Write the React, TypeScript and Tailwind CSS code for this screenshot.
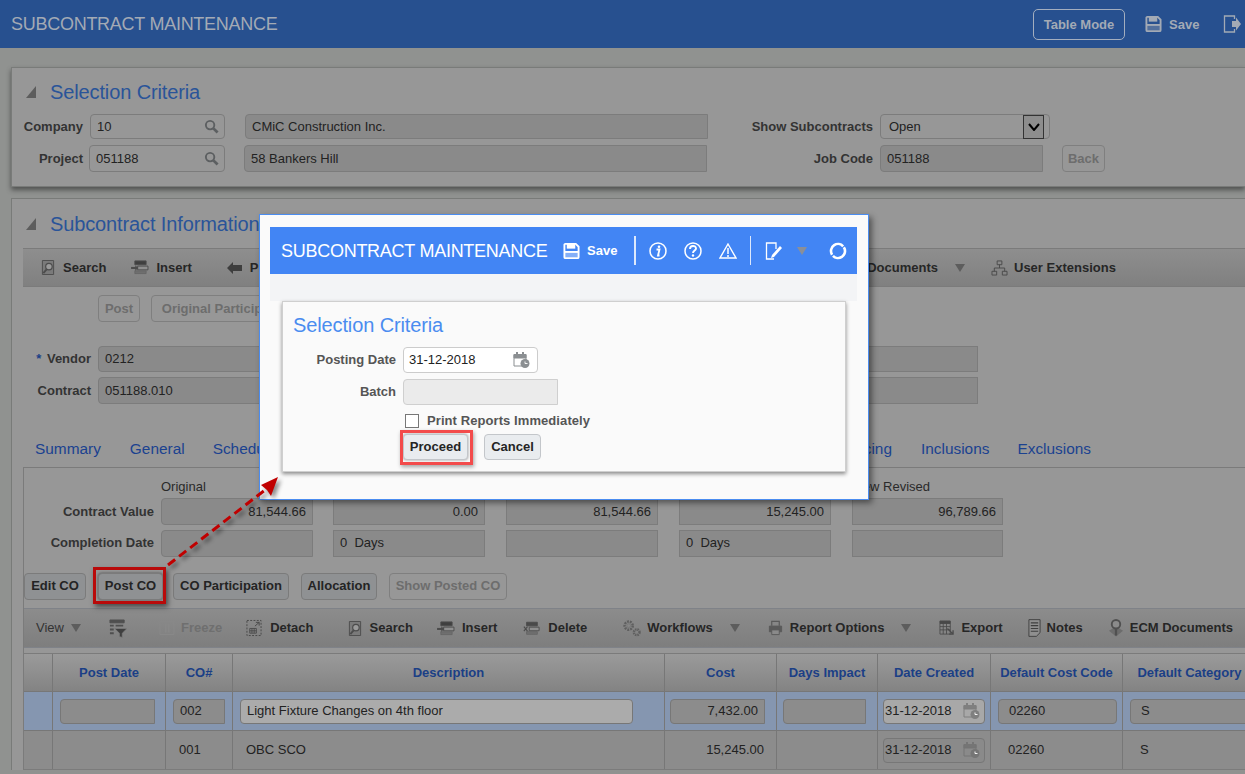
import type { ReactNode } from "react";

const Floppy = ({ className = "" }: { className?: string }) => (
  <svg viewBox="0 0 18 18" className={className} fill="none" stroke="currentColor" strokeWidth="2">
    <path d="M1.500 2.500a1 1 0 0 1 1-1h11l3 3v11a1 1 0 0 1-1 1h-13a1 1 0 0 1-1-1z" />
    <path d="M4 1.500h9v5H4z" fill="currentColor" stroke="none" />
    <path d="M2 10h14v6H2z" fill="currentColor" fillOpacity=".35" stroke="none" />
    <path d="M2 10h14" />
  </svg>
);

const Magnifier = () => (
  <svg viewBox="0 0 16 16" className="h-[15px] w-[15px] text-[#5c5f61]" fill="none" stroke="currentColor">
    <circle cx="6.500" cy="6.500" r="4.500" strokeWidth="2" />
    <path d="M10 10l4.500 4.500" strokeWidth="3" />
  </svg>
);

const Caret = ({ className = "" }: { className?: string }) => (
  <svg viewBox="0 0 10 8" className={`h-[8px] w-[10px] ${className}`}>
    <path d="M0 0h10L5 8z" fill="currentColor" />
  </svg>
);

const SearchDoc = () => (
  <svg viewBox="0 0 15 18" className="h-[17px] w-[14px] text-[#4c4c4c]" fill="none" stroke="currentColor">
    <path d="M1.500 1.500h12v15h-12z" fill="#7a7a7a" />
    <circle cx="8.500" cy="8" r="3.500" fill="#9a9a9a" strokeWidth="1.300" />
    <path d="M6 11l-3.500 4" strokeWidth="2" />
  </svg>
);

const InsertIco = () => (
  <svg viewBox="0 0 19 16" className="h-[15px] w-[18px] text-[#4c4c4c]" fill="none" stroke="currentColor">
    <path d="M4 1h12v4H4z" fill="#3f3f3f" />
    <path d="M7 6.500h11v4H7z" fill="#8f8f8f" />
    <path d="M4 11.500h12v3H4z" fill="#6f6f6f" stroke="#666" />
    <path d="M0 8.500h7" strokeWidth="2.200" />
    <path d="M4.500 5.500l3 3-3 3z" fill="currentColor" stroke="none" />
  </svg>
);

const DeleteIco = () => (
  <svg viewBox="0 0 19 16" className="h-[15px] w-[17px] text-[#4c4c4c]" fill="none" stroke="currentColor">
    <path d="M4 1h12v4H4z" fill="#4a4a4a" />
    <path d="M7 6.500h11v4H7z" fill="#8f8f8f" />
    <path d="M4 11.500h12v3H4z" fill="#6f6f6f" stroke="#666" />
    <path d="M1 6l4 5M5 6l-4 5" strokeWidth="1.300" />
  </svg>
);

const BackArrow = () => (
  <svg viewBox="0 0 15 12" className="h-[12px] w-[15px] text-[#3e3e3e]">
    <path d="M0 6l6-6v3h9v6H6v3z" fill="currentColor" />
  </svg>
);

const FilterIco = () => (
  <svg viewBox="0 0 19 20" className="h-[19px] w-[18px] text-[#4f4f4f]" fill="none" stroke="currentColor">
    <path d="M1 1h15v3H1z" fill="currentColor" />
    <path d="M1 6h4v2H1zM7 6h8v2H7zM1 10h4v2H1zM1 14h4v2H1z" fill="currentColor" stroke="none" />
    <path d="M6 10h13l-5 5v4.500l-3-1V15z" fill="#3f3f3f" stroke="#7f7f7f" strokeWidth=".7" />
  </svg>
);

const FreezeIco = () => (
  <svg viewBox="0 0 16 16" className="h-[16px] w-[16px] text-[#888]" fill="none" stroke="currentColor">
    <path d="M1 1.500h14v13H1z" />
    <path d="M6 3.500h1.500v9H6zM9 3.500h1.500v9H9z" fill="currentColor" stroke="none" />
  </svg>
);

const DetachIco = () => (
  <svg viewBox="0 0 17 19" className="h-[18px] w-[16px] text-[#484848]" fill="none" stroke="currentColor">
    <path d="M1 1.500h15v16H1z" strokeDasharray="2 1.500" />
    <path d="M4 10h7v5H4zM6.300 10v5M8.700 10v5M4 12.500h7" strokeWidth=".9" />
    <path d="M9.500 7.500L14 3.500M10.500 3.500H14V7" strokeWidth="1" />
  </svg>
);

const Gears = () => (
  <svg viewBox="0 0 20 19" className="h-[18px] w-[19px] text-[#5f5f5f]" fill="none" stroke="currentColor">
    <circle cx="7" cy="7" r="4.300" strokeWidth="2.600" strokeDasharray="2 1" />
    <circle cx="7" cy="7" r="2" stroke="#777" strokeWidth="1" />
    <circle cx="15.500" cy="14" r="3" strokeWidth="2.600" strokeDasharray="1.600 .8" />
  </svg>
);

const Printer = () => (
  <svg viewBox="0 0 15 17" className="h-[16px] w-[15px] text-[#5a5a5a]" fill="none" stroke="currentColor">
    <path d="M3.500 6V1.500h8V6" strokeWidth="1.300" />
    <path d="M1 6.500h13v6H1z" fill="currentColor" />
    <path d="M3.500 10.500h8v5h-8z" fill="#8a8a8a" strokeWidth="1" />
  </svg>
);

const ExportIco = () => (
  <svg viewBox="0 0 16 17" className="h-[16px] w-[15px] text-[#4a4a4a]" fill="none" stroke="currentColor">
    <path d="M1 1h11v2.500H1z" fill="currentColor" />
    <path d="M1 3.500h11V15H1zM1 7h11M1 10.500h11M4.500 3.500V15M8 3.500V15" strokeWidth=".9" />
    <path d="M9 9l6 6M11 15h4v-4" strokeWidth="1.400" />
  </svg>
);

const NotesIco = () => (
  <svg viewBox="0 0 14 20" className="h-[20px] w-[13px] text-[#3f3f3f]" fill="none" stroke="currentColor">
    <path d="M1 1h12v14l-4 4H1z" fill="#8f8f8f" />
    <path d="M3 4.500h8M3 7.500h8M3 10.500h8M3 13.500h8" strokeWidth="1.200" />
  </svg>
);

const PinIco = () => (
  <svg viewBox="0 0 17 20" className="h-[20px] w-[16px] text-[#505050]" fill="none" stroke="currentColor">
    <path d="M1 13l7.500 6 7.500-6-4-2.500h-7z" fill="#6c6c6c" stroke="none" />
    <circle cx="8.500" cy="6" r="4.500" fill="#8b8b8b" strokeWidth="2" />
    <path d="M8.500 10.500V18" strokeWidth="2.400" />
  </svg>
);

const OrgIco = () => (
  <svg viewBox="0 0 18 17" className="h-[16px] w-[17px] text-[#4a4a4a]" fill="none" stroke="currentColor">
    <path d="M6.500 1h5v4h-5zM1 12h5v4H1zM12 12h5v4h-5zM9 5v3.500M3.500 12V8.500h11V12" />
  </svg>
);

const CalClock = ({ className = "" }: { className?: string }) => (
  <svg viewBox="0 0 17 18" className={`h-[18px] w-[17px] ${className}`} fill="none" stroke="currentColor">
    <path d="M1 3.500h12V15H1z" />
    <path d="M1 3.500h12V7H1z" fill="currentColor" />
    <path d="M4 1v3M10 1v3" strokeWidth="2" />
    <circle cx="12" cy="12.500" r="4.500" fill="currentColor" stroke="none" />
    <path d="M12 10.500v2h2.500" stroke="#fff" strokeWidth=".9" />
  </svg>
);

function Tool({ icon, label, className = "", gap = "ml-[8px]", muted = false }: { icon: ReactNode; label: string; className?: string; gap?: string; muted?: boolean }) {
  return (
    <div className={`flex shrink-0 items-center ${className}`}>
      {icon}
      <span className={`${gap} whitespace-nowrap text-[13px] font-bold ${muted ? "text-[#6f6f6f]" : "text-[#262626]"}`}>{label}</span>
    </div>
  );
}

function Field({ children, className = "" }: { children?: ReactNode; className?: string }) {
  return (
    <div className={`flex h-full shrink-0 items-center whitespace-pre border border-[#7c7c7c] bg-[#8a8a8a] px-[6px] text-[13px] text-[#222] ${className}`}>
      {children}
    </div>
  );
}

function Label({ children, className = "" }: { children: ReactNode; className?: string }) {
  return <div className={`shrink-0 whitespace-nowrap text-right text-[13px] font-bold ${className}`}>{children}</div>;
}

function Btn({ children, className = "", off = false }: { children: ReactNode; className?: string; off?: boolean }) {
  return (
    <div className={`flex shrink-0 items-center justify-center whitespace-nowrap rounded-[4px] border text-[13px] font-bold ${off ? "border-[#7f7f7f] text-[#6d6d6d]" : "text-[#242424]"} ${className}`}>
      {children}
    </div>
  );
}

function PanelTitle({ children }: { children: ReactNode }) {
  return (
    <div className="flex items-center">
      <span className="ml-[14px] h-0 w-0 border-b-[12px] border-l-[10px] border-b-[#5d5d5d] border-l-transparent" />
      <span className="ml-[14px] whitespace-nowrap text-[20px] tracking-[-0.12px] text-[#2a5499]">{children}</span>
    </div>
  );
}

const Th = ({ children }: { children?: ReactNode }) => (
  <div className="flex items-center justify-center whitespace-nowrap border-r border-[#777] text-[13px] font-bold text-[#1b3f86]">{children}</div>
);

const Td = ({ children, className = "" }: { children?: ReactNode; className?: string }) => (
  <div className={`flex min-w-0 items-center overflow-hidden whitespace-nowrap border-r border-[#777] text-[13px] text-[#222] ${className}`}>{children}</div>
);

const Box = ({ children, className = "" }: { children?: ReactNode; className?: string }) => (
  <div className={`flex h-[25px] shrink-0 items-center border border-[#777] ${className}`}>{children}</div>
);

const cols = "grid-cols-[29px_113px_67px_432px_112px_101px_113px_132px_134px]";

export default function App() {
  return (
    <div className="relative h-[774px] w-[1245px] overflow-hidden bg-[#909290] font-['Liberation_Sans',Arial,sans-serif]">
      {/* dimmed page */}
      <header className="flex h-[48px] items-center bg-[#27508f] pl-[11px] pr-[4px] text-[#a3aab5]">
        <span className="whitespace-nowrap text-[18px] tracking-[-0.27px]">SUBCONTRACT MAINTENANCE</span>
        <div className="ml-auto flex h-[31px] w-[92px] items-center justify-center rounded-[5px] border border-[#a3aebf] pt-[2px] text-[13px] font-bold">Table Mode</div>
        <Floppy className="ml-[20px] h-[18px] w-[17px]" />
        <span className="ml-[7px] w-[29px] pt-[2px] text-[13px] font-bold">Save</span>
        <svg viewBox="0 0 18 18" className="ml-[25px] h-[18px] w-[18px]" fill="none" stroke="currentColor">
          <path d="M11.500 4V1H1.500v16h10v-3" strokeWidth="1.300" />
          <path d="M9 6h4V2.500L18 9l-5 6.500V12H9z" fill="currentColor" stroke="none" />
        </svg>
      </header>

      <div className="pl-[11px] pt-[19px]">
        <section className="h-[120px] border border-r-0 border-[#797b79] bg-[#979797] shadow-[0_3px_5px_rgba(0,0,0,.45)]">
          <div className="flex h-[46px] items-center pt-[2px]">
            <PanelTitle>Selection Criteria</PanelTitle>
          </div>
          <div className="flex h-[25px] items-center">
            <Label className="w-[71px] text-[#333]">Company</Label>
            <div className="ml-[7px] flex h-full w-[135px] items-center justify-between rounded-[4px] border border-[#7c7c7c] bg-[#979797] pl-[6px] pr-[5px] text-[13px] text-[#222]">
              10 <Magnifier />
            </div>
            <Field className="ml-[20px] w-[463px] rounded-l-[4px]">CMiC Construction Inc.</Field>
            <Label className="w-[165px] text-[#333]">Show Subcontracts</Label>
            <div className="ml-[7px] flex h-full w-[170px] items-center justify-between rounded-[4px] border border-[#7c7c7c] bg-[#979797] pl-[8px] pr-[5px] text-[13px] text-[#222]">
              Open
              <span className="flex h-[24px] w-[21px] items-center justify-center border border-[#333] bg-[#8d8d8d]">
                <svg viewBox="0 0 12 8" className="h-[8px] w-[12px]" fill="none" stroke="#000" strokeWidth="2"><path d="M1 1l5 6 5-6" /></svg>
              </span>
            </div>
          </div>
          <div className="mt-[6px] flex h-[27px] items-center">
            <Label className="w-[71px] text-[#333]">Project</Label>
            <div className="ml-[6px] flex h-full w-[136px] items-center justify-between rounded-[4px] border border-[#7c7c7c] bg-[#979797] pl-[6px] pr-[5px] text-[13px] text-[#222]">
              051188 <Magnifier />
            </div>
            <Field className="ml-[19px] w-[463px] rounded-l-[4px]">58 Bankers Hill</Field>
            <Label className="w-[166px] text-[#333]">Job Code</Label>
            <Field className="ml-[7px] w-[163px] rounded-l-[4px]">051188</Field>
            <Btn off className="ml-[19px] h-[27px] w-[43px]">Back</Btn>
          </div>
        </section>

        <section className="mt-[11px] border-l border-t border-[#797b79] bg-[#979797]">
          <div className="flex h-[49px] items-center">
            <PanelTitle>Subcontract Information</PanelTitle>
          </div>

          <div className="ml-[11px] flex h-[39px] items-center border-y border-[#7b7b7b] bg-gradient-to-b from-[#8e8e8e] to-[#808080]">
            <Tool className="ml-[18px]" icon={<SearchDoc />} label="Search" />
            <Tool className="ml-[25px]" gap="ml-[7px]" icon={<InsertIco />} label="Insert" />
            <Tool className="ml-[35px]" icon={<BackArrow />} label="Previous" />
            <span className="ml-auto whitespace-nowrap text-[13px] font-bold text-[#262626]">ECM Documents</span>
            <div className="flex w-[307px] shrink-0 items-center">
              <Caret className="ml-[17px] text-[#5d5d5d]" />
              <Tool className="ml-[26px]" gap="ml-[6px]" icon={<OrgIco />} label="User Extensions" />
            </div>
          </div>

          <div className="ml-[86px] mt-[8px] flex gap-[11px]">
            <Btn off className="h-[27px] w-[42px]">Post</Btn>
            <Btn off className="h-[27px] w-[153px]">Original Participation</Btn>
          </div>

          <div className="mt-[24px] flex h-[26px] items-center">
            <Label className="w-[79px] text-[#333]"><span className="mr-[2px] text-[#1b3f86]">*</span> Vendor</Label>
            <Field className="ml-[7px] w-[300px] rounded-l-[4px]">0212</Field>
            <Field className="ml-[470px] w-[110px]" />
          </div>
          <div className="mt-[5px] flex h-[27px] items-center">
            <Label className="w-[79px] text-[#333]">Contract</Label>
            <Field className="ml-[7px] w-[300px] rounded-l-[4px]">051188.010</Field>
            <Field className="ml-[470px] w-[110px]" />
          </div>

          <div className="flex h-[63px] items-end pb-[7px] text-[15.4px] text-[#1b4290]">
            <span className="ml-[23px]">Summary</span>
            <span className="ml-[29px]">General</span>
            <span className="ml-[28px]">Schedule</span>
            <span className="ml-auto">Invoicing</span>
            <div className="flex w-[353px] shrink-0">
              <span className="ml-[29px]">Inclusions</span>
              <span className="ml-[28px]">Exclusions</span>
            </div>
          </div>

          <div className="ml-[11px] border-l border-t border-[#7b7b7b]">
            <div className="flex h-[30px] items-end pb-[2px] text-[13px] text-[#2a2a2a]">
              <span className="ml-[137px]">Original</span>
              <span className="ml-auto mr-[315px]">New Revised</span>
            </div>
            <div className="flex h-[27px] items-center">
              <Label className="w-[130px] text-[#333]">Contract Value</Label>
              <Field className="ml-[7px] w-[152px] justify-end rounded-l-[4px]">81,544.66</Field>
              <Field className="ml-[20px] w-[152px] justify-end">0.00</Field>
              <Field className="ml-[21px] w-[152px] justify-end">81,544.66</Field>
              <Field className="ml-[21px] w-[152px] justify-end">15,245.00</Field>
              <Field className="ml-[21px] w-[151px] justify-end">96,789.66</Field>
            </div>
            <div className="mt-[5px] flex h-[27px] items-center">
              <Label className="w-[130px] pb-[1px] text-[#333]">Completion Date</Label>
              <Field className="ml-[7px] w-[152px] rounded-l-[4px]" />
              <Field className="ml-[20px] w-[152px] pb-[2px]">0  Days</Field>
              <Field className="ml-[21px] w-[152px]" />
              <Field className="ml-[21px] w-[152px] pb-[2px]">0  Days</Field>
              <Field className="ml-[21px] w-[151px]" />
            </div>

            <div className="mt-[16px] flex">
              <Btn className="h-[27px] w-[62px] border-[#7b7b7b] bg-[#8f9193] pb-[2px]">Edit CO</Btn>
              <Btn className="ml-[12px] h-[27px] w-[65px] border-[#7b7b7b] bg-[#8f9193] pb-[2px] shadow-[0_0_3px_rgba(0,0,0,.5)]">Post CO</Btn>
              <Btn className="ml-[10px] h-[27px] w-[116px] border-[#7b7b7b] bg-[#8f9193] pb-[2px]">CO Participation</Btn>
              <Btn className="ml-[12px] h-[27px] w-[76px] border-[#7b7b7b] bg-[#8f9193] pb-[2px]">Allocation</Btn>
              <Btn off className="ml-[12px] h-[27px] w-[118px] pb-[2px]">Show Posted CO</Btn>
            </div>

            <div className="mt-[8px] flex h-[40px] items-center border-y border-[#7f8288] bg-gradient-to-b from-[#8c8c8c] to-[#7e7e7e]">
              <span className="ml-[12px] text-[13px] text-[#333]">View</span>
              <Caret className="ml-[7px] text-[#5d5d5d]" />
              <div className="ml-[28px]"><FilterIco /></div>
              <Tool muted className="ml-[32px]" gap="ml-[6px]" icon={<FreezeIco />} label="Freeze" />
              <Tool className="ml-[24px]" icon={<DetachIco />} label="Detach" />
              <Tool className="ml-[34px]" icon={<SearchDoc />} label="Search" />
              <Tool className="ml-[24px]" gap="ml-[7px]" icon={<InsertIco />} label="Insert" />
              <Tool className="ml-[26px]" icon={<DeleteIco />} label="Delete" />
              <Tool className="ml-[35px]" gap="ml-[6px]" icon={<Gears />} label="Workflows" />
              <Caret className="ml-[17px] text-[#5d5d5d]" />
              <Tool className="ml-[28px]" gap="ml-[7px]" icon={<Printer />} label="Report Options" />
              <Caret className="ml-[17px] text-[#5d5d5d]" />
              <Tool className="ml-[28px]" gap="ml-[7px]" icon={<ExportIco />} label="Export" />
              <Tool className="ml-[25px]" gap="ml-[6px]" icon={<NotesIco />} label="Notes" />
              <Tool className="ml-[25px]" gap="ml-[6px]" icon={<PinIco />} label="ECM Documents" />
            </div>

            <div className="mt-[5px] border-y border-[#7b7b7b]">
              <div className={`grid h-[38px] ${cols} border-b border-[#777] bg-gradient-to-b from-[#9a9a9a] via-[#8f8f8f] to-[#838383]`}>
                <Th />
                <Th>Post Date</Th>
                <Th>CO#</Th>
                <Th>Description</Th>
                <Th>Cost</Th>
                <Th>Days Impact</Th>
                <Th>Date Created</Th>
                <Th>Default Cost Code</Th>
                <Th>Default Category</Th>
              </div>
              <div className={`grid h-[39px] ${cols} border-b border-[#777] bg-[#8596b0]`}>
                <Td />
                <Td><Box className="ml-[7px] w-[95px] rounded-l-[4px] bg-[#8c8c8c]" /></Td>
                <Td><Box className="ml-[7px] w-[52px] rounded-l-[4px] bg-[#8c8c8c] px-[6px]">002</Box></Td>
                <Td><Box className="ml-[7px] w-[393px] rounded-[4px] bg-[#ababab] px-[6px]">Light Fixture Changes on 4th floor</Box></Td>
                <Td><Box className="ml-[5px] w-[95px] justify-end rounded-l-[4px] bg-[#8c8c8c] px-[6px]">7,432.00</Box></Td>
                <Td><Box className="ml-[6px] w-[83px] rounded-l-[4px] bg-[#8c8c8c]" /></Td>
                <Td><Box className="ml-[5px] w-[102px] justify-between rounded-[4px] bg-[#a8a8a8] pl-[1px] pr-[4px]">31-12-2018<CalClock className="text-[#7f7f7f]" /></Box></Td>
                <Td><Box className="ml-[7px] w-[119px] rounded-[4px] bg-[#8c8c8c] pl-[10px]">02260</Box></Td>
                <Td><Box className="ml-[7px] w-[130px] rounded-l-[4px] bg-[#8c8c8c] pl-[10px]">S</Box></Td>
              </div>
              <div className={`grid h-[38px] ${cols} bg-[#8c8c8c]`}>
                <Td />
                <Td />
                <Td className="pl-[13px]">001</Td>
                <Td className="pl-[13px]">OBC SCO</Td>
                <Td className="justify-end pr-[12px]">15,245.00</Td>
                <Td />
                <Td><Box className="ml-[5px] w-[102px] justify-between rounded-[4px] bg-[#8a8a8a] pl-[1px] pr-[4px]">31-12-2018<CalClock className="text-[#757575]" /></Box></Td>
                <Td className="pl-[17px]">02260</Td>
                <Td className="pl-[17px]">S</Td>
              </div>
            </div>
          </div>
        </section>
      </div>

      {/* red highlight on Post CO */}
      <div className="absolute left-[93px] top-[567px] h-[37px] w-[73px] border-[3px] border-[#b90a0a] shadow-[2px_3px_5px_rgba(0,0,0,.5)]" />

      {/* modal */}
      <div className="absolute left-[259px] top-[214px] h-[286px] w-[610px] border border-[#4a8cf0] bg-[#fafafa] shadow-[3px_3px_6px_rgba(0,0,0,.45)]">
        <div className="ml-[10px] mt-[12px] flex h-[47px] w-[587px] items-center bg-[#4285f4] pl-[11px] text-white">
          <span className="w-[267px] whitespace-nowrap pt-[1px] text-[18px] tracking-[-0.27px]">SUBCONTRACT MAINTENANCE</span>
          <Floppy className="ml-[15px] h-[18px] w-[17px]" />
          <span className="ml-[7px] text-[13px] font-bold">Save</span>
          <span className="ml-[17px] h-[29px] w-[2px] bg-[#dce8fc]" />
          <svg viewBox="0 0 18 18" className="ml-[13px] h-[18px] w-[18px]" fill="none" stroke="currentColor">
            <circle cx="9" cy="9" r="8" strokeWidth="1.500" />
            <circle cx="10" cy="4.700" r="1.300" fill="currentColor" stroke="none" />
            <path d="M7.500 7.500h3L9 13.500h1.500" strokeWidth="1.800" />
          </svg>
          <svg viewBox="0 0 18 18" className="ml-[17px] h-[18px] w-[18px]" fill="none" stroke="currentColor">
            <circle cx="9" cy="9" r="8" strokeWidth="1.500" />
            <path d="M6 7c0-4 6-4 6-.500 0 2-3 2-3 4.500" strokeWidth="1.900" />
            <circle cx="9" cy="13.500" r="1.200" fill="currentColor" stroke="none" />
          </svg>
          <svg viewBox="0 0 18 16" className="ml-[17px] h-[16px] w-[18px]" fill="none" stroke="currentColor">
            <path d="M9 1l8 14H1z" strokeWidth="1.400" />
            <path d="M9 5v6M9 12v2" strokeWidth="1.500" />
          </svg>
          <span className="ml-[13px] h-[29px] w-px bg-[#dce8fc]" />
          <svg viewBox="0 0 18 18" className="ml-[14px] h-[18px] w-[18px]" fill="none" stroke="currentColor">
            <path d="M9 17H1.500V1H11v6" strokeWidth="1.300" />
            <path d="M6 16l1-3 8-9 2 2-8 9z" fill="currentColor" stroke="none" />
          </svg>
          <Caret className="ml-[14px] text-[#8a8f99]" />
          <svg viewBox="0 0 18 18" className="ml-[22px] h-[18px] w-[18px]" fill="none" stroke="currentColor" strokeWidth="2.600">
            <circle cx="9" cy="9" r="7" strokeDasharray="20.500 1.500" transform="rotate(-33 9 9)" />
          </svg>
        </div>
        <div className="ml-[10px] h-[27px] w-[587px] bg-[#f3f4f6]" />
        <div className="ml-[22px] h-[171px] w-[564px] border border-[#cfcfcf] bg-[#fafafa] shadow-[0_2px_4px_rgba(0,0,0,.45)]">
          <div className="pl-[10px] pt-[12px] text-[20px] leading-[23px] tracking-[-0.12px] text-[#4a8cf0]">Selection Criteria</div>
          <div className="mt-[10px] flex h-[26px] items-center">
            <Label className="w-[113px] text-[#555]">Posting Date</Label>
            <div className="ml-[7px] flex h-full w-[135px] items-center justify-between rounded-[4px] border border-[#ccc] bg-white pl-[5px] pr-[7px] text-[13px] text-[#222]">
              31-12-2018
              <CalClock className="text-[#8b8f92]" />
            </div>
          </div>
          <div className="mt-[6px] flex h-[26px] items-center">
            <Label className="w-[113px] text-[#555]">Batch</Label>
            <div className="ml-[7px] h-full w-[155px] rounded-l-[4px] border border-[#cfcfcf] bg-[#ebebeb]" />
          </div>
          <div className="ml-[122px] mt-[8px] flex h-[16px] items-center">
            <span className="h-[14px] w-[14px] border border-[#777] bg-white" />
            <span className="ml-[8px] text-[13px] font-bold tracking-[0.08px] text-[#555]">Print Reports Immediately</span>
          </div>
          <div className="ml-[120px] mt-[5px] flex">
            <Btn className="h-[26px] w-[65px] border-[#c3c6ca] bg-[#e9ecef] pb-[1px] shadow-[0_0_3px_rgba(0,0,0,.4)]">Proceed</Btn>
            <Btn className="ml-[16px] h-[26px] w-[57px] border-[#c3c6ca] bg-[#e9ecef] pb-[1px]">Cancel</Btn>
          </div>
        </div>
      </div>
      <div className="absolute left-[400px] top-[430px] h-[35px] w-[73px] border-[3px] border-[#f34b4b] shadow-[1px_2px_4px_rgba(0,0,0,.35)]" />

      {/* dashed arrow from Post CO up to the dialog */}
      <svg className="absolute left-[160px] top-[470px] h-[100px] w-[125px] drop-shadow-[3px_3px_2px_rgba(0,0,0,.45)]" viewBox="0 0 125 100" fill="none">
        <path d="M8 95L105 20" stroke="#c00000" strokeWidth="3" strokeDasharray="9 5" />
        <path d="M119 7l-7 19-4-6-6-5z" transform="translate(-1 0)" fill="#c00000" />
      </svg>
    </div>
  );
}
